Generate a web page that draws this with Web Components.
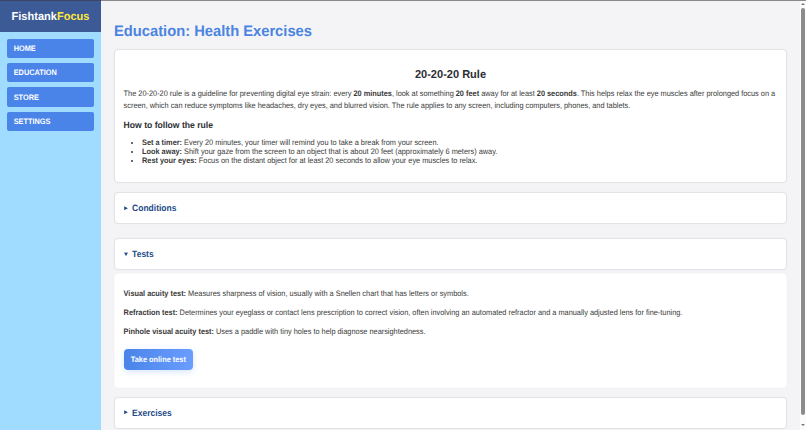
<!DOCTYPE html>
<html lang="en"><head><meta charset="utf-8"><title>FishtankFocus</title>
<style>
html,body{margin:0;height:100%;overflow:hidden}
body{font-family:"Liberation Sans",Arial,sans-serif;font-size:7.375px;color:#383838;text-rendering:geometricPrecision;background:#f4f4f7}
</style></head><body>
<focus-app></focus-app>
<script>
const define=(name,html)=>customElements.define(name,class extends HTMLElement{
  constructor(){super();this.attachShadow({mode:'open'}).innerHTML=html;}
});
define('tall-text',`<style>:host{display:block;transform:translateY(.2px) scaleY(1.08)}</style><slot></slot>`);
define('nav-item',`<style>:host{display:flex;align-items:center;height:19.5px;padding-left:7px;border-radius:2px;background:#4a84e8;color:#fff;font-weight:bold}</style><tall-text><slot></slot></tall-text>`);
define('side-bar',`<style>
:host{display:block;width:101px;background:#9fdcff}
header{height:32px;padding-top:1px;box-sizing:border-box;background:linear-gradient(#3b4562 0 1px,#3c5a96 1px);color:#fff;font-weight:bold;font-size:11.04px;display:flex;align-items:center;justify-content:center}
header span{color:#ffeb3b}
header tall-text{transform:scaleY(1.04)}
nav{display:grid;gap:4.9px;padding:6.5px 6.7px}
</style><header><tall-text>Fishtank<span>Focus</span></tall-text></header>
<nav><nav-item>HOME</nav-item><nav-item>EDUCATION</nav-item><nav-item>STORE</nav-item><nav-item>SETTINGS</nav-item></nav>`);
define('page-card',`<style>:host{display:block;box-sizing:border-box;background:#fff;border:1px solid #e2e3e6;border-radius:4px;padding:0 8.6px;box-shadow:0 0 2px rgba(0,0,0,.04)}:host([plain]){border-color:#fbfbfc}</style><slot></slot>`);
define('fold-title',`<style>:host{display:flex;align-items:center;height:100%;gap:4.5px;color:#234a88;font-weight:bold;font-size:8.5px}
svg{width:4px;height:4.5px;fill:currentColor}:host([open]) svg{transform:rotate(90deg)}</style><svg viewBox="0 0 4 4"><path d="M.2 0L3.9 2L.2 4z"/></svg><tall-text><slot></slot></tall-text>`);
define('action-button',`<style>:host{display:flex;width:69.5px;height:21px;align-items:center;justify-content:center;border-radius:4px;background:linear-gradient(90deg,#4a84e8,#6a9dff);color:#fff;font-weight:bold;box-shadow:0 2px 6px rgba(74,132,232,.22)}</style><tall-text><slot></slot></tall-text>`);
define('scroll-rail',`<style>:host{display:flex;flex-direction:column;align-items:center;width:6px;height:429px;background:#fbfbfb;margin-top:1px}
svg{width:4px;height:2px;fill:#777;margin:2px 0 3px}i{display:block;width:4px;height:407px;border-radius:2px;background:#8b8b8b}svg.d{margin:9px 0 0}</style>
<svg viewBox="0 0 4 2"><path d="M0 2L2 0L4 2z"/></svg><i></i><svg class="d" viewBox="0 0 4 2"><path d="M0 0L2 2L4 0z"/></svg>`);
define('focus-app',`<style>
:host{display:flex;height:430px;overflow:hidden;background:linear-gradient(#88888d 0 1px,#f4f4f7 1px)}
main{flex:1;padding:0 13px;display:flex;flex-direction:column;min-width:0}
h1{margin:0;height:49px;padding-top:24px;box-sizing:border-box;line-height:17px;font-size:14.72px;color:#4a84e0}
h1 tall-text{transform:scaleY(1.04)}
h2{margin:0;padding-top:17.5px;line-height:14px;text-align:center;font-size:11.04px;color:#2c2e33}
h3{margin:0;padding-top:8.8px;line-height:10px;font-size:8.62px;color:#2c2e33}
h2 tall-text,h3 tall-text{transform:scaleY(1.04)}
p{margin:0;line-height:11.8px;white-space:nowrap}
ul{margin:0;padding:8.9px 0 0 18.4px;line-height:8.75px}
.rule{height:134px}.rule p:first-of-type{margin-top:6.5px}
.fold{height:32px}.detail p{margin-bottom:7.3px}
</style><side-bar></side-bar><main><h1><tall-text>Education: Health Exercises</tall-text></h1>
<page-card class="rule"><h2><tall-text>20-20-20 Rule</tall-text></h2>
<p><tall-text>The 20-20-20 rule is a guideline for preventing digital eye strain: every <b>20 minutes</b>, look at something <b>20 feet</b> away for at least <b>20 seconds</b>. This helps relax the eye muscles after prolonged focus on a</tall-text></p><p><tall-text>screen, which can reduce symptoms like headaches, dry eyes, and blurred vision. The rule applies to any screen, including computers, phones, and tablets.</tall-text></p>
<h3><tall-text>How to follow the rule</tall-text></h3>
<ul><li><tall-text><b>Set a timer:</b> Every 20 minutes, your timer will remind you to take a break from your screen.</tall-text></li><li><tall-text><b>Look away:</b> Shift your gaze from the screen to an object that is about 20 feet (approximately 6 meters) away.</tall-text></li><li><tall-text><b>Rest your eyes:</b> Focus on the distant object for at least 20 seconds to allow your eye muscles to relax.</tall-text></li></ul></page-card>
<page-card class="fold" style="margin-top:9px"><fold-title>Conditions</fold-title></page-card>
<page-card class="fold" style="margin-top:14px"><fold-title open>Tests</fold-title></page-card>
<page-card class="detail" plain style="margin-top:2.5px;height:115px;padding-top:14.2px"><p><tall-text><b>Visual acuity test:</b> Measures sharpness of vision, usually with a Snellen chart that has letters or symbols.</tall-text></p><p><tall-text><b>Refraction test:</b> Determines your eyeglass or contact lens prescription to correct vision, often involving an automated refractor and a manually adjusted lens for fine-tuning.</tall-text></p><p><tall-text><b>Pinhole visual acuity test:</b> Uses a paddle with tiny holes to help diagnose nearsightedness.</tall-text></p><action-button style="margin-top:11.2px">Take online test</action-button></page-card>
<page-card class="fold" style="margin-top:9px"><fold-title>Exercises</fold-title></page-card>
</main><scroll-rail></scroll-rail>`);
</script></body></html>
